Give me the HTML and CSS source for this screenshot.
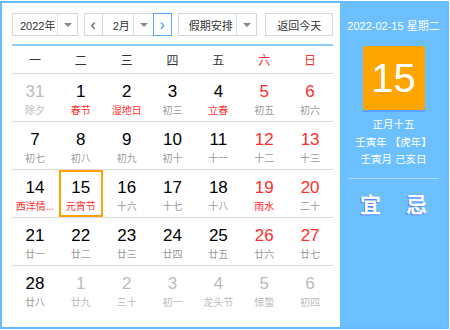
FILE: index.html
```html
<!DOCTYPE html>
<html lang="zh">
<head>
	<meta charset="UTF-8" />
	<title>万年历</title>
	<link rel="stylesheet" href="styles.css">
</head>
<body>
	<div class="calendar">
		<div class="main">
			<div class="toolbar">
				<div class="select year"><span>2022年</span><i class="arrow"></i></div>
				<div class="month-group">
					<span class="nav">&lsaquo;</span>
					<div class="select month"><span>2月</span><i class="arrow"></i></div>
					<span class="nav next">&rsaquo;</span>
				</div>
				<div class="select holiday"><span>假期安排</span><i class="arrow"></i></div>
				<button class="today-btn">返回今天</button>
			</div>
			<ul class="week">
				<li>一</li><li>二</li><li>三</li><li>四</li><li>五</li><li class="red">六</li><li class="red">日</li>
			</ul>
			<div class="days">
				<div class="row">
					<div class="day other"><b>31</b><em>除夕</em></div>
					<div class="day"><b>1</b><em class="red">春节</em></div>
					<div class="day"><b>2</b><em class="red">湿地日</em></div>
					<div class="day"><b>3</b><em>初三</em></div>
					<div class="day"><b>4</b><em class="red">立春</em></div>
					<div class="day weekend"><b>5</b><em>初五</em></div>
					<div class="day weekend"><b>6</b><em>初六</em></div>
				</div>
				<div class="row">
					<div class="day"><b>7</b><em>初七</em></div>
					<div class="day"><b>8</b><em>初八</em></div>
					<div class="day"><b>9</b><em>初九</em></div>
					<div class="day"><b>10</b><em>初十</em></div>
					<div class="day"><b>11</b><em>十一</em></div>
					<div class="day weekend"><b>12</b><em>十二</em></div>
					<div class="day weekend"><b>13</b><em>十三</em></div>
				</div>
				<div class="row">
					<div class="day"><b>14</b><em class="red">西洋情...</em></div>
					<div class="day selected"><b>15</b><em class="red">元宵节</em></div>
					<div class="day"><b>16</b><em>十六</em></div>
					<div class="day"><b>17</b><em>十七</em></div>
					<div class="day"><b>18</b><em>十八</em></div>
					<div class="day weekend"><b>19</b><em class="red">雨水</em></div>
					<div class="day weekend"><b>20</b><em>二十</em></div>
				</div>
				<div class="row">
					<div class="day"><b>21</b><em>廿一</em></div>
					<div class="day"><b>22</b><em>廿二</em></div>
					<div class="day"><b>23</b><em>廿三</em></div>
					<div class="day"><b>24</b><em>廿四</em></div>
					<div class="day"><b>25</b><em>廿五</em></div>
					<div class="day weekend"><b>26</b><em>廿六</em></div>
					<div class="day weekend"><b>27</b><em>廿七</em></div>
				</div>
				<div class="row last">
					<div class="day"><b>28</b><em>廿八</em></div>
					<div class="day other"><b>1</b><em>廿九</em></div>
					<div class="day other"><b>2</b><em>三十</em></div>
					<div class="day other"><b>3</b><em>初一</em></div>
					<div class="day other"><b>4</b><em>龙头节</em></div>
					<div class="day other"><b>5</b><em>惊蛰</em></div>
					<div class="day other"><b>6</b><em>初四</em></div>
				</div>
			</div>
		</div>
		<div class="side">
			<p class="side-date">2022-02-15 星期二</p>
			<div class="big-day">15</div>
			<p class="lunar">正月十五</p>
			<p class="lunar">壬寅年 【虎年】</p>
			<p class="lunar">壬寅月 己亥日</p>
			<div class="yiji"><span>宜</span><span>忌</span></div>
		</div>
	</div>
</body>
</html>
```

FILE: styles.css
```css
*{
	box-sizing: border-box;
}
body{
	margin: 0;
	font-family: "Liberation Sans", "Noto Sans CJK SC", sans-serif;
}
ul{
	margin: 0;
	padding: 0;
	list-style: none;
}
p{
	margin: 0;
}
.calendar{
	display: flex;
	width: 449px;
	height: 328px;
	margin-top: 1px;
	border: 2px solid #66bcff;
	background: #fff;
}
.main{
	width: 338px;
	padding: 10px 7px 0 10px;
}
.side{
	flex: 1;
	background: #6cc0ff;
	color: #fff;
	text-align: center;
	padding-top: 14px;
}

/* toolbar */
.toolbar{
	display: flex;
	align-items: center;
	height: 23px;
	font-size: 11px;
	color: #333;
	white-space: nowrap;
}
.select{
	display: flex;
	align-items: center;
	height: 23px;
	border: 1px solid #d6d6d6;
	background: #fff;
}
.select span{
	flex: 1;
	padding-left: 7px;
}
.arrow{
	position: relative;
	flex: none;
	width: 20px;
	height: 21px;
	border-left: 1px solid #e2e2e2;
}
.arrow:after{
	content: "";
	position: absolute;
	left: 6px;
	top: 9px;
	border: 4px solid transparent;
	border-top-color: #888;
}
.year{
	width: 66px;
}
.month-group{
	display: flex;
	margin-left: 6px;
}
.nav{
	width: 19px;
	height: 23px;
	line-height: 21px;
	text-align: center;
	font-size: 16px;
	color: #555;
	border: 1px solid #d6d6d6;
}
.nav.next{
	border-color: #55aaff;
	color: #3399ff;
}
.month{
	width: 50px;
	border-left: 0;
	border-right: 0;
}
.month span{
	padding-left: 10px;
}
.holiday{
	width: 80px;
	margin-left: 6px;
}
.holiday span{
	padding-left: 10px;
}
.today-btn{
	margin-left: 8px;
	width: 68px;
	height: 23px;
	border: 1px solid #d6d6d6;
	background: #fff;
	font: 11px "Liberation Sans", "Noto Sans CJK SC", sans-serif;
	color: #333;
	padding: 0;
}

/* week header */
.week{
	display: flex;
	margin-top: 8px;
	border-top: 2px solid #8ccfff;
	border-bottom: 1px solid #ddd;
	height: 30px;
	align-items: center;
}
.week li{
	flex: 1;
	text-align: center;
	font-size: 12px;
	color: #333;
}
.red{
	color: #ff2d2d !important;
}

/* day grid */
.row{
	display: flex;
	height: 48px;
	border-bottom: 1px solid #ddd;
}
.row.last{
	border-bottom: 0;
}
.day{
	flex: 1;
	min-width: 0;
	display: flex;
	flex-direction: column;
	align-items: center;
	padding-top: 6px;
	margin: 0 1px;
	border: 2px solid transparent;
}
.day b{
	font-weight: normal;
	font-size: 17px;
	color: #000;
	line-height: 20px;
}
.day em{
	font-style: normal;
	font-size: 10px;
	color: #999;
	line-height: 17px;
	white-space: nowrap;
}
.day.weekend b{
	color: #ff2d2d;
}
.day.other b,
.day.other em{
	color: #bbb;
}
.day.selected{
	border: 2px solid #ffa200;
}

/* side panel */
.side-date{
	font-size: 11px;
}
.big-day{
	width: 62px;
	height: 64px;
	margin: 13px auto 6px;
	background: #ffa500;
	border-radius: 2px;
	box-shadow: 0 2px 0 #5aa0ff;
	font-size: 40px;
	line-height: 64px;
}
.lunar{
	font-size: 10.5px;
	line-height: 17.5px;
}
.yiji{
	display: flex;
	justify-content: center;
	gap: 25px;
	margin: 9px 8px 0;
	padding-top: 9px;
	border-top: 1px solid #a9dbff;
	font-size: 21px;
	font-weight: bold;
	text-shadow: -1px 1px 0 #5b7fff;
}
```
